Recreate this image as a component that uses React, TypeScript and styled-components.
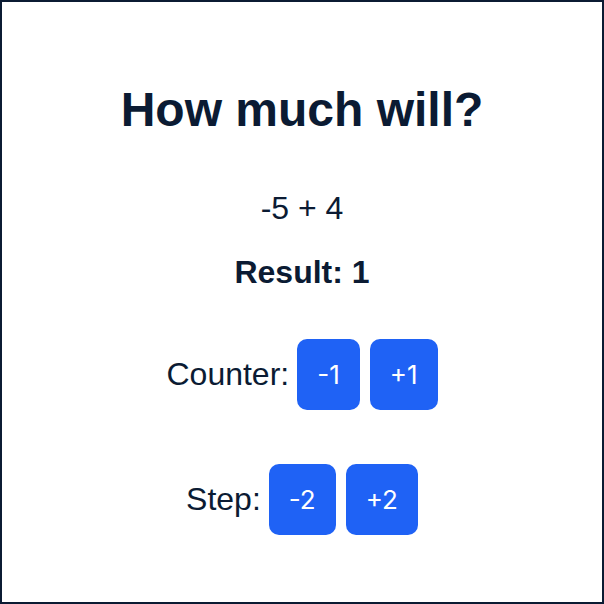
import React, { useState } from "react";
import styled, { createGlobalStyle } from "styled-components";

const Global = createGlobalStyle`
  html, body { margin: 0; padding: 0; background: #fff; }
  * { box-sizing: border-box; }
`;

const Frame = styled.div`
  width: 604px;
  height: 604px;
  border: 2px solid #0b1b33;
  display: flex;
  flex-direction: column;
  align-items: center;
  color: #0b1b33;
  font-family: "Liberation Sans", Arial, sans-serif;
  padding-top: 80px;
`;

const Title = styled.h1`
  margin: 0;
  font-size: 48px;
  font-weight: 700;
  line-height: 55px;
`;

const Expr = styled.p`
  margin: 53px 0 0;
  font-size: 32px;
  line-height: 37px;
`;

const Result = styled.p`
  margin: 27px 0 0;
  font-size: 32px;
  font-weight: 700;
  line-height: 37px;
`;

const Row = styled.div<{ $top: number }>`
  display: flex;
  align-items: center;
  gap: 10px;
  margin-top: ${(p) => p.$top}px;
`;

const Label = styled.span`
  font-size: 32px;
  margin-right: -2px;
`;

const Btn = styled.button`
  height: 71px;
  padding: 0 20px;
  border: none;
  border-radius: 10px;
  background: #1f62f5;
  color: #fff;
  font-family: Inter, "Liberation Sans", sans-serif;
  font-size: 26px;
  cursor: pointer;
`;

export default function App() {
  const [a, setA] = useState(-5);
  const [b, setB] = useState(4);
  return (
    <>
      <Global />
      <Frame>
        <Title>How much will?</Title>
        <Expr>
          {a} + {b}
        </Expr>
        <Result>Result: {Math.abs(a + b)}</Result>
        <Row $top={48}>
          <Label>Counter:</Label>
          <Btn onClick={() => setA(a - 1)}>-1</Btn>
          <Btn onClick={() => setA(a + 1)}>+1</Btn>
        </Row>
        <Row $top={54}>
          <Label>Step:</Label>
          <Btn onClick={() => setB(b - 2)}>-2</Btn>
          <Btn onClick={() => setB(b + 2)}>+2</Btn>
        </Row>
      </Frame>
    </>
  );
}
